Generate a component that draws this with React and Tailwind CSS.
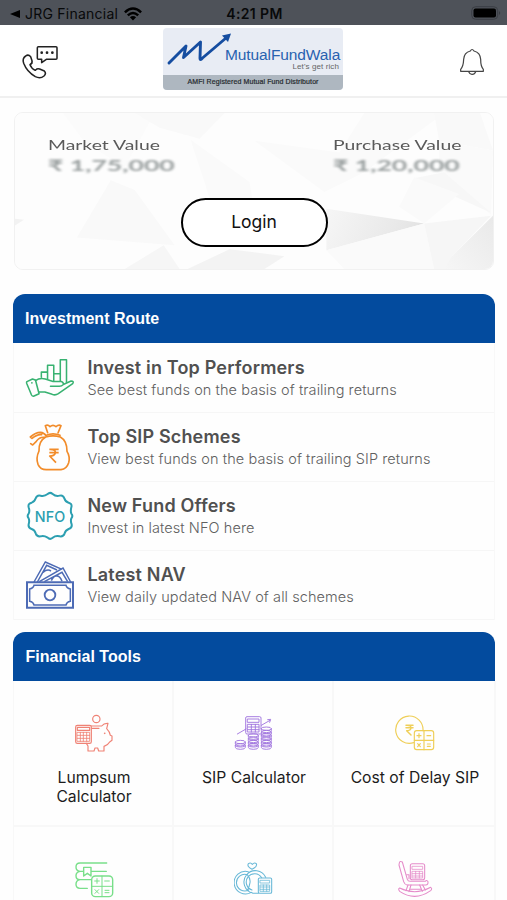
import React from "react";

const stroke = { fill: "none", strokeLinecap: "round", strokeLinejoin: "round" };

function StatusBar() {
  return (
    <div className="grid h-[25px] grid-cols-3 items-center bg-[#4e5259] text-[#08090a]">
      <div className="flex items-center pl-[10px] pt-[2px]">
        <svg className="h-[8px] w-[10px]" viewBox="0 0 10 8"><path d="M0 4 10 0V8Z" /></svg>
        <span className="ml-[5px] whitespace-nowrap text-[14px] leading-[20px] tracking-[0.24px]">JRG Financial</span>
        <svg className="ml-[6px] h-[14px] w-[18px] shrink-0" viewBox="0 0 18 14">
          <g fill="none" stroke="#000" strokeWidth="2.5">
            <path d="M.9 5.3Q9-2.3 17.1 5.3" />
            <path d="M3.8 8.4Q9 3.6 14.2 8.4" />
          </g>
          <path d="M5.9 10.3Q9 7.8 12.1 10.3L9 13.6Z" />
        </svg>
      </div>
      <div className="whitespace-nowrap pl-[2px] pt-[2px] text-center text-[14px] font-semibold tracking-[0.35px]">4:21 PM</div>
      <div className="flex justify-end pr-[6px] pt-[1px]">
        <svg className="h-[14px] w-[30px]" viewBox="0 0 30 14">
          <rect x=".7" y=".7" width="26" height="12.6" rx="4" fill="none" stroke="#3b3e44" />
          <rect x="2.5" y="2.5" width="22.5" height="9" rx="2" />
          <path d="M28.2 5q2 2 0 4Z" fill="#35383d" />
        </svg>
      </div>
    </div>
  );
}

function PhoneChat() {
  return (
    <svg className="h-[36px] w-[38px]" viewBox="60 132 114 108" {...stroke} stroke="#222" strokeWidth="4.6">
      <path d="M112 140H165Q168 140 168 143V175Q168 178 165 178H136L122 188V178H112Q109 178 109 175V143Q109 140 112 140Z" />
      <path d="M122 158h.2M138 158h.2M154 158h.2" strokeWidth="8" />
      <path d="M74 168Q82 162 89 170L93 182Q95 188 87 194Q91 205 103 211Q109 204 116 207L130 213Q137 220 129 228Q118 237 103 230Q78 216 68 190Q63 175 74 168Z" />
      <path d="M88 194q3-2 6-4M103 211q4-4 6-6" strokeWidth="3" />
    </svg>
  );
}

function Bell() {
  return (
    <svg className="h-[28px] w-[26px]" viewBox="617 144 78 84" {...stroke} stroke="#454545" strokeWidth="3.7">
      <path d="M651 153Q656 144 662 153Q681 158 682 178Q682 200 690 208V214H622V208Q630 200 631 178Q632 158 651 153Z" />
      <path d="M646 215Q650 224 657 223Q664 223 667 215" />
    </svg>
  );
}

function Logo() {
  return (
    <div className="flex h-[62px] w-[180px] flex-col overflow-hidden rounded-[4px] bg-[#e8ecf4]">
      <div className="relative h-[47px]">
        <svg className="h-[40px] w-[80px]" viewBox="0 0 80 40">
          <path d="M6 35 23 18 20.5 29.5 37.5 14 37 30Q37 33 39.5 30L63 10" fill="none" stroke="#154da0" strokeWidth="2.9" strokeLinecap="round" strokeLinejoin="round" />
          <path d="M59 7.5 68 5.5 65 14Z" fill="#154da0" />
        </svg>
        <span className="absolute left-[62px] top-[20px] whitespace-nowrap font-['Liberation_Sans',sans-serif] text-[15.5px] leading-[14px] tracking-[-0.1px] text-[#2862b0]">MutualFundWala</span>
        <span className="absolute right-[4px] top-[35px] whitespace-nowrap font-['Liberation_Sans',sans-serif] text-[8px] leading-[8px] tracking-[0.1px] text-[#666]">Let's get rich</span>
      </div>
      <div className="flex flex-1 items-center justify-center whitespace-nowrap bg-[#aeb7c0] font-['Liberation_Sans',sans-serif] text-[7px] tracking-[0.1px] text-[#252a2e] [-webkit-text-stroke:0.2px_#252a2e]">
        AMFI Registered Mutual Fund Distributor
      </div>
    </div>
  );
}

function CardBackdrop() {
  return (
    <svg className="absolute inset-0 h-full w-full" viewBox="0 0 479 158" preserveAspectRatio="none">
      <defs>
        <linearGradient id="shard" x1="0" y1="0" x2="1" y2="0.2">
          <stop offset="0" stopColor="#f6f6f6" />
          <stop offset="0.75" stopColor="#e9e9e9" />
          <stop offset="1" stopColor="#e3e3e3" />
        </linearGradient>
        <linearGradient id="fold" x1="0" y1="1" x2="1" y2="0">
          <stop offset="0" stopColor="#f6f6f6" />
          <stop offset="1" stopColor="#e9e9e9" />
        </linearGradient>
      </defs>
      <rect width="479" height="158" fill="#fdfdfd" />
      <path d="M48 0H140L110 55 70 30Z" fill="#fbfbfb" />
      <path d="M120 0H210L185 26 145 15Z" fill="#f9f9f9" />
      <path d="M96 68 120 78 160 134 62 126Z" fill="#f9f9f9" />
      <path d="M176 27 235 70 240 100 195 86Z" fill="#fafafa" />
      <path d="M110 158 149 134 165 158Z" fill="#f6f6f6" />
      <path d="M173 158 215 138 270 145 250 158Z" fill="#f3f3f3" />
      <path d="M0 107 9 108 0 114Z" fill="#f2f2f2" />
      <path d="M240 28 325 40 350 0H430L350 60 310 80Z" fill="#fafafa" />
      <path d="M420 0H466L479 38 425 28Z" fill="#f9f9f9" />
      <path d="M425 28 479 38 477 103 425 58Z" fill="#fafafa" />
      <path d="M430 60 477 101 400 66Z" fill="#f7f7f7" />
      <path d="M312 97 410 112 312 139Z" fill="url(#shard)" />
      <path d="M312 139 410 112 420 158H330Z" fill="#fafafa" />
      <path d="M410 112 477 104 438 145 442 158H420Z" fill="#f6f6f6" />
      <path d="M479 104 438 145 430 158H479Z" fill="url(#fold)" />
      <path d="M385 95 400 65 445 82 410 112Z" fill="#fafafa" />
    </svg>
  );
}

function Amount({ label, value, className }) {
  return (
    <div className={className}>
      <p className="w-max origin-left scale-x-[1.49] whitespace-nowrap text-[13px] leading-[16px] text-[#5a5a5a]">{label}</p>
      <p className="mt-[3px] w-max origin-left scale-x-[1.66] whitespace-nowrap text-[16px] font-bold leading-[18px] text-[#999f9f] blur-[0.9px]">{value}</p>
    </div>
  );
}

function ValueCard() {
  return (
    <div className="relative ml-[14px] mr-[13px] mt-[14px] h-[158px] overflow-hidden rounded-[9px] border border-[#f1f1f1] font-['Lato',sans-serif]">
      <CardBackdrop />
      <div className="relative flex h-full flex-col items-center">
        <div className="flex w-full justify-between px-[32px] pt-[24px]">
          <Amount className="w-[128px] pl-px" label="Market Value" value="₹ 1,75,000" />
          <Amount className="w-[128px]" label="Purchase Value" value="₹ 1,20,000" />
        </div>
        <button className="mt-[24px] h-[49px] w-[147px] rounded-full border-2 border-black bg-white font-['Inter',sans-serif] text-[17.5px] text-[#111]">Login</button>
      </div>
    </div>
  );
}

function HandChart() {
  return (
    <svg className="h-[42px] w-[51px]" viewBox="75 214 153 126" {...stroke} stroke="#38b271" strokeWidth="4.7">
      <path d="M125 275V259H144M144 280V238H163V285M163 264H183M183 287V221H202V290" />
      <path d="M81 288 98 280 107 283 118 325 101 333Q97 333 95 329L80 293Q79 290 81 288Z" />
      <path d="M107 285Q120 276 137 280L161 288H186Q195 291 191 298Q188 302 180 302H153M192 297 216 286Q226 286 221 294L177 325Q168 331 158 327L136 320H117" />
      <path d="M96 292h.2" strokeWidth="5" />
    </svg>
  );
}

function MoneyBag() {
  return (
    <svg className="h-[49px] w-[44px]" viewBox="89 409 132 147" {...stroke} stroke="#f28c2a" strokeWidth="5">
      <path d="M148 438 141 417Q149 413 155 420Q164 412 173 420Q181 413 188 417L179 439" />
      <path d="M144 446Q164 437 185 446M143 447Q138 438 126 437Q112 437 96 451L101 455Q117 442 130 444M139 452Q124 450 114 464L103 475L97 471" />
      <path d="M142 451Q121 463 122 493Q112 514 119 533Q126 549 144 549H188Q205 547 211 528Q216 510 206 494Q206 462 186 451Q164 444 142 451Z" />
      <path d="M153 488H181M153 498H181M155 488Q173 488 171 499Q169 508 154 508L173 528" strokeWidth="5" strokeLinecap="butt" />
    </svg>
  );
}

function Nfo() {
  return (
    <svg className="h-[50px] w-[50px]" viewBox="77 76 150 150">
      <path {...stroke} stroke="#2c9fb1" strokeWidth="6" d="M145 85Q152 78 160 85Q170 94 181 90Q191 87 195 98Q198 109 208 111Q219 114 216 125Q213 137 216 144Q222 151 216 158Q213 166 217 176Q219 187 208 190Q198 194 196 203Q192 214 181 212Q169 209 160 216Q152 223 145 216Q134 209 124 212Q113 214 109 203Q106 193 97 190Q86 187 88 176Q91 165 88 158Q82 151 88 144Q92 136 88 125Q85 114 97 111Q106 108 109 98Q113 87 124 90Q135 93 145 85Z" />
      <text x="152" y="170" textAnchor="middle" textLength="92" className="font-['Inter',sans-serif] text-[43px] font-medium" fill="#2c9fb1">NFO</text>
    </svg>
  );
}

function Notes() {
  return (
    <svg className="h-[50px] w-[50px]" viewBox="77 285 150 150" fill="none" stroke="#4d6bb5" strokeWidth="4.5">
      <path d="M83 352H221V428H83Z" strokeWidth="6" />
      <path d="M104 361H200Q202 370 213 372V409Q202 411 200 420H104Q102 411 91 409V372Q102 370 104 361Z" />
      <circle cx="152" cy="390" r="16" strokeWidth="5.5" />
      <path d="M104 351 138 291 188 313M114 351 142 301 173 315M120 350 191 309 214 351M135 350 188 322 205 350M131 322Q144 311 155 318M156 347Q162 334 170 333Q182 331 188 349" />
    </svg>
  );
}

function Piggy() {
  return (
    <svg className="h-[39px] w-[40px]" viewBox="221 279 120 117" {...stroke} stroke="#ef8275" strokeWidth="3.5">
      <circle cx="288" cy="294" r="11" />
      <rect x="226" y="313" width="47" height="54" rx="5" />
      <rect x="231" y="319" width="37" height="9" />
      <path d="M231 334H268V361H231ZM231 343H268M231 352H268M240 334V361M249 334V361M259 334V361" strokeWidth="2.5" />
      <path d="M273 315H304Q311 306 323 307L319 323Q328 332 330 343L335 345V358L328 363Q324 371 311 376V390H295L292 381H284L281 390H263V375L258 367M276 322H296" />
      <path d="M313 337h.2" strokeWidth="5" />
    </svg>
  );
}

function Coins({ x, y, count }) {
  return Array.from({ length: count }, (_, i) => (
    <path key={i} d={`M${x} ${y - i * 10}v6q0 6 15 6t15-6v-6q0-5-15-5t-15 5q0 5 15 5t15-5`} />
  ));
}

function SipIcon() {
  return (
    <svg className="h-[36px] w-[40px]" viewBox="0 0 120 108" {...stroke} stroke="#a176df" strokeWidth="2.8">
      <path d="M10 57 36 42M82 31 108 16M101 14 110 13 107 22" />
      <path d="M82 57H39Q35 57 35 53V9Q35 5 39 5H77Q81 5 81 9V42" />
      <path d="M41 12H75V22H41ZM41 28H75V51H41ZM41 36H75M41 44H75M52 28V51M64 28V51" />
      <Coins x={4} y={91} count={2} />
      <Coins x={43} y={91} count={4} />
      <Coins x={82} y={91} count={6} />
    </svg>
  );
}

function DelayIcon() {
  return (
    <svg className="h-[36px] w-[40px]" viewBox="427 282 120 108" {...stroke} stroke="#efcf59" strokeWidth="3.5">
      <path d="M483 365A41 41 0 1 1 511 329" />
      <path d="M460 313H481M460 320H481M463 313Q476 313 475 321Q474 329 462 329L475 342" strokeWidth="4.5" />
      <rect x="485" y="329" width="58" height="57" rx="7" />
      <path d="M514 329V386M485 358H543M499 338V350M493 344H505M523 344H534M495 368 503 377M503 368 495 377M524 369H533M524 376H533" />
    </svg>
  );
}

function BooksIcon() {
  return (
    <svg className="h-[38px] w-[40px]" viewBox="222 130 120 114" {...stroke} stroke="#79df8a" strokeWidth="4.2">
      <path d="M320 139H240Q228 139 228 151Q228 163 240 164H251M273 164H319M240 164Q228 166 228 177Q228 189 240 189H273M240 189Q228 191 228 203Q228 215 240 215H262M251 152H273V178L262 170 251 178Z" />
      <rect x="275" y="178" width="63" height="62" rx="11" />
      <path d="M306 178V240M275 209H338M291 186V200M284 193H298M314 193H328M285 219 296 230M296 219 285 230M315 221H327M315 228H327" strokeWidth="3" />
    </svg>
  );
}

function RingsIcon() {
  return (
    <svg className="h-[34px] w-[40px]" viewBox="0 0 120 102" {...stroke} stroke="#68b8d7" strokeWidth="3.2">
      <path d="M54 22Q38 14 43 5Q50 0 55 7Q61 0 67 5Q71 14 54 22Z" />
      <path d="M43 29A34 34 0 1 0 52 91M40 38A25 25 0 1 0 44 84M56 93A34 34 0 1 1 95 46M54 84A25 25 0 1 1 83 47M40 38Q50 50 48 62Q46 76 40 85M56 94H73" />
      <rect x="73" y="48" width="40" height="46" rx="4" />
      <path d="M79 55H107V63H79ZM79 69H107V88H79ZM79 75H107M79 82H107M88 69V88M98 69V88" strokeWidth="2.3" />
    </svg>
  );
}

function ChairIcon() {
  return (
    <svg className="h-[38px] w-[36px]" viewBox="432 132 108 114" {...stroke} stroke="#e58cca" strokeWidth="3.2">
      <path d="M439 141Q440 134 448 138L463 190Q465 196 471 196H517Q521 190 525 197Q526 207 518 207H462Q455 206 452 197L438 147Z" />
      <rect x="472" y="143" width="43" height="48" rx="6" />
      <path d="M478 151H509V160H478ZM478 166H509V186H478ZM478 173H509M478 180H509M488 166V186M499 166V186" strokeWidth="2.3" />
      <path d="M465 207 459 224M474 207 468 227M500 207 508 226M509 207 517 222M473 220H503" />
      <path d="M440 216Q487 239 533 214Q539 218 533 224Q486 257 440 226Q434 219 440 216ZM461 176H468V188" />
    </svg>
  );
}

function SectionTitle({ children, className }) {
  return (
    <h2 className={`flex h-[49px] items-center rounded-t-[12px] bg-[#034b9e] font-['Liberation_Sans',sans-serif] text-[16px] font-bold text-white ${className}`}>
      {children}
    </h2>
  );
}

const routes = [
  { Icon: HandChart, title: "Invest in Top Performers", text: "See best funds on the basis of trailing returns" },
  { Icon: MoneyBag, title: "Top SIP Schemes", text: "View best funds on the basis of trailing SIP returns" },
  { Icon: Nfo, title: "New Fund Offers", text: "Invest in latest NFO here" },
  { Icon: Notes, title: "Latest NAV", text: "View daily updated NAV of all schemes" },
];

const tools = [
  { Icon: Piggy, label: "Lumpsum Calculator" },
  { Icon: SipIcon, label: "SIP Calculator" },
  { Icon: DelayIcon, label: "Cost of Delay SIP" },
  { Icon: BooksIcon, label: "" },
  { Icon: RingsIcon, label: "" },
  { Icon: ChairIcon, label: "" },
];

export default function App() {
  return (
    <main className="h-[900px] w-[507px] overflow-hidden bg-[#fefefe] font-['Inter',sans-serif]">
      <StatusBar />
      <header className="flex h-[73px] items-start justify-between border-b-2 border-[#f0f0f0] bg-white pl-[21px] pr-[22px] pt-[3px]">
        <div className="w-[120px] pt-[16px]"><PhoneChat /></div>
        <Logo />
        <div className="flex w-[120px] justify-end pt-[20px]"><Bell /></div>
      </header>
      <ValueCard />
      <section className="mx-[13px] mt-[24px] w-[482px]">
        <SectionTitle className="pl-[12px]">Investment Route</SectionTitle>
        <ul className="border-x border-[#f8f8f8] pt-px">
          {routes.map(({ Icon, title, text }) => (
            <li key={title} className="flex h-[69px] items-center border-b border-[#f6f6f6] pl-[11px]">
              <div className="flex w-[52px] shrink-0 justify-center pr-[2px]"><Icon /></div>
              <div className="ml-[10.5px] whitespace-nowrap">
                <h3 className="text-[18px] font-semibold leading-[23px] tracking-[0.17px] text-[#505050]">{title}</h3>
                <p className="text-[14.5px] font-light leading-[22px] tracking-[0.08px] text-[#606060]">{text}</p>
              </div>
            </li>
          ))}
        </ul>
      </section>
      <section className="mx-[13px] mt-[12px] w-[482px]">
        <SectionTitle className="pl-[12.5px]">Financial Tools</SectionTitle>
        <div className="grid grid-cols-[160px_160px_162px] border-l border-[#f8f8f8]">
          {tools.map(({ Icon, label }, i) => (
            <div key={i} className="flex h-[146px] flex-col items-center border-b-2 border-r-2 border-[#f8f8f8] pl-[2px] pt-[32px]">
              <div className="flex h-[40px] items-center"><Icon /></div>
              <p className="mt-[15px] w-[136px] text-center text-[15.7px] leading-[19px] text-[#1c1c1c]">{label}</p>
            </div>
          ))}
        </div>
      </section>
    </main>
  );
}
